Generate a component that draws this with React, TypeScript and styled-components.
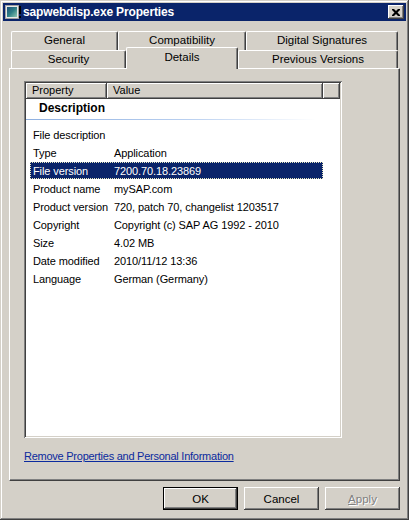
import React from "react";
import styled, { createGlobalStyle, css } from "styled-components";

const Global = createGlobalStyle`
  html, body { margin: 0; padding: 0; background: #d4d0c8; }
  body { font-family: "Liberation Sans", Arial, sans-serif; font-size: 11px; color: #000; }
`;

const raised = css`
  box-shadow: inset -1px -1px #404040, inset 1px 1px #ffffff, inset -2px -2px #808080, inset 2px 2px #d4d0c8;
`;

const Window = styled.div`
  width: 409px;
  height: 520px;
  box-sizing: border-box;
  padding: 3px;
  background: #d4d0c8;
  box-shadow: inset -1px -1px #404040, inset 1px 1px #d4d0c8, inset -2px -2px #808080, inset 2px 2px #ffffff;
  display: flex;
  flex-direction: column;
`;

const TitleBar = styled.div`
  height: 18px;
  background: #0a246a;
  display: flex;
  align-items: center;
  padding: 0 2px;
  color: #fff;
`;

const TitleText = styled.div`
  flex: 1;
  margin-left: 2px;
  font-weight: bold;
  font-size: 12px;
  letter-spacing: -0.15px;
`;

const CloseButton = styled.div`
  width: 16px;
  height: 14px;
  background: #d4d0c8;
  ${raised};
  display: flex;
  align-items: center;
  justify-content: center;
`;

const Body = styled.div`
  padding: 10px 6px 0 6px;
  display: flex;
  flex-direction: column;
`;

const TabStrip = styled.div`
  display: flex;
  flex-direction: column;
  padding: 0 2px;
`;

const TabRow = styled.div<{ $h: number }>`
  display: flex;
  height: ${(p) => p.$h}px;
  align-items: flex-start;
`;

const Tab = styled.div<{ $w: number; $h: number; $active?: boolean }>`
  width: ${(p) => p.$w}px;
  height: ${(p) => p.$h}px;
  box-sizing: border-box;
  background: #d4d0c8;
  border-top: 1px solid #ffffff;
  border-left: 1px solid #ffffff;
  border-right: 1px solid #404040;
  border-radius: 2px 2px 0 0;
  box-shadow: inset -1px 0 #808080;
  display: flex;
  justify-content: center;
  align-items: flex-start;
  line-height: 17px;
  font-size: 11.5px;
  ${(p) =>
    p.$active &&
    css`
      position: relative;
      z-index: 1;
      margin-top: -3px;
      padding-top: 1px;
    `}
`;

const Panel = styled.div`
  height: 413px;
  box-sizing: border-box;
  border-top: 1px solid #ffffff;
  border-left: 1px solid #ffffff;
  border-right: 1px solid #404040;
  border-bottom: 1px solid #404040;
  box-shadow: inset -1px -1px #808080;
  padding: 12px 0 0 14px;
  display: flex;
  flex-direction: column;
`;

const ListView = styled.div`
  width: 318px;
  height: 357px;
  box-sizing: border-box;
  background: #fff;
  padding: 2px;
  box-shadow: inset 1px 1px #808080, inset -1px -1px #ffffff, inset 2px 2px #404040, inset -2px -2px #d4d0c8;
  display: flex;
  flex-direction: column;
`;

const Header = styled.div`
  display: flex;
  height: 16px;
`;

const HeaderCell = styled.div<{ $w?: number }>`
  ${(p) => (p.$w ? `width: ${p.$w}px;` : "flex: 1;")}
  box-sizing: border-box;
  background: #d4d0c8;
  ${raised};
  padding-left: 6px;
  line-height: 15px;
`;

const GroupTitle = styled.div`
  height: 18px;
  line-height: 18px;
  padding-left: 13px;
  font-weight: bold;
  font-size: 12px;
`;

const GroupLine = styled.div`
  height: 1px;
  margin-top: 2px;
  margin-bottom: 6px;
  width: 290px;
  background: linear-gradient(to right, #8fb0e0, #b8cff0 55%, #ffffff);
`;

const DataRow = styled.div<{ $selected?: boolean }>`
  display: flex;
  height: 18px;
  margin-left: 4px;
  width: 293px;
  box-sizing: border-box;
  align-items: stretch;
  ${(p) =>
    p.$selected &&
    css`
      color: #fff;
    `}
`;

const RowFill = styled.div<{ $selected?: boolean }>`
  display: flex;
  flex: 1;
  height: 17px;
  align-items: center;
  ${(p) =>
    p.$selected &&
    css`
      background: #0a246a;
      outline: 1px dotted #e8e8c0;
      outline-offset: -1px;
    `}
`;

const PropCell = styled.div`
  width: 77px;
  padding-left: 3px;
  box-sizing: border-box;
  white-space: nowrap;
  letter-spacing: -0.1px;
`;

const ValueCell = styled.div`
  padding-left: 7px;
  white-space: nowrap;
  letter-spacing: -0.1px;
`;

const Link = styled.a`
  margin-top: 11px;
  color: #0b2a9e;
  text-decoration: underline;
  line-height: 14px;
  letter-spacing: -0.25px;
  align-self: flex-start;
  cursor: pointer;
`;

const ButtonRow = styled.div`
  display: flex;
  justify-content: flex-end;
  gap: 6px;
  margin-top: 6px;
`;

const Button = styled.div<{ $default?: boolean; $disabled?: boolean }>`
  width: 75px;
  height: 23px;
  box-sizing: border-box;
  display: flex;
  align-items: center;
  justify-content: center;
  font-size: 11.5px;
  background: #d4d0c8;
  ${raised};
  ${(p) =>
    p.$default &&
    css`
      box-shadow: inset 0 0 0 1px #000, inset -2px -2px #404040, inset 2px 2px #ffffff, inset -3px -3px #808080;
    `}
  ${(p) =>
    p.$disabled &&
    css`
      color: #808080;
      text-shadow: 1px 1px #ffffff;
    `}
`;

const Mnemonic = styled.span`
  text-decoration: underline;
`;

const AppIcon = () => (
  <svg width="16" height="16" viewBox="0 0 16 16">
    <defs>
      <linearGradient id="ig" x1="0" y1="0" x2="1" y2="1">
        <stop offset="0" stopColor="#1d4f78" />
        <stop offset="0.5" stopColor="#2f7f86" />
        <stop offset="1" stopColor="#8fc8b0" />
      </linearGradient>
    </defs>
    <rect x="0.5" y="1.5" width="13" height="13" fill="#e8e8e8" stroke="#a0a0a0" />
    <rect x="2" y="3" width="10" height="10" fill="url(#ig)" />
    <rect x="14" y="2" width="2" height="8" fill="#000" />
    <rect x="14" y="12" width="2" height="2" fill="#000" />
  </svg>
);

const CloseGlyph = () => (
  <svg width="8" height="7" viewBox="0 0 8 7">
    <path d="M0 0h2l2 2 2-2h2v1l-2.5 2.5L8 6v1H6L4 5 2 7H0V6l2.5-2.5L0 1z" fill="#000" />
  </svg>
);

const rows: { k: string; v: string; sel?: boolean }[] = [
  { k: "File description", v: "" },
  { k: "Type", v: "Application" },
  { k: "File version", v: "7200.70.18.23869", sel: true },
  { k: "Product name", v: "mySAP.com" },
  { k: "Product version", v: "720, patch 70, changelist 1203517" },
  { k: "Copyright", v: "Copyright (c) SAP AG 1992 - 2010" },
  { k: "Size", v: "4.02 MB" },
  { k: "Date modified", v: "2010/11/12 13:36" },
  { k: "Language", v: "German (Germany)" },
];

export default function App() {
  return (
    <>
      <Global />
      <Window>
        <TitleBar>
          <AppIcon />
          <TitleText>sapwebdisp.exe Properties</TitleText>
          <CloseButton>
            <CloseGlyph />
          </CloseButton>
        </TitleBar>
        <Body>
          <TabStrip>
            <TabRow $h={19}>
              <Tab $w={107} $h={19}>General</Tab>
              <Tab $w={128} $h={19}>Compatibility</Tab>
              <Tab $w={152} $h={19}>Digital Signatures</Tab>
            </TabRow>
            <TabRow $h={18}>
              <Tab $w={115} $h={18}>Security</Tab>
              <Tab $w={112} $h={22} $active>Details</Tab>
              <Tab $w={160} $h={18}>Previous Versions</Tab>
            </TabRow>
          </TabStrip>
          <Panel>
            <ListView>
              <Header>
                <HeaderCell $w={81}>Property</HeaderCell>
                <HeaderCell $w={216}>Value</HeaderCell>
                <HeaderCell />
              </Header>
              <GroupTitle>Description</GroupTitle>
              <GroupLine />
              {rows.map((r) => (
                <DataRow key={r.k} $selected={r.sel}>
                  <RowFill $selected={r.sel}>
                    <PropCell>{r.k}</PropCell>
                    <ValueCell>{r.v}</ValueCell>
                  </RowFill>
                </DataRow>
              ))}
            </ListView>
            <Link>Remove Properties and Personal Information</Link>
          </Panel>
          <ButtonRow>
            <Button $default>OK</Button>
            <Button>Cancel</Button>
            <Button $disabled>
              <Mnemonic>A</Mnemonic>pply
            </Button>
          </ButtonRow>
        </Body>
      </Window>
    </>
  );
}
